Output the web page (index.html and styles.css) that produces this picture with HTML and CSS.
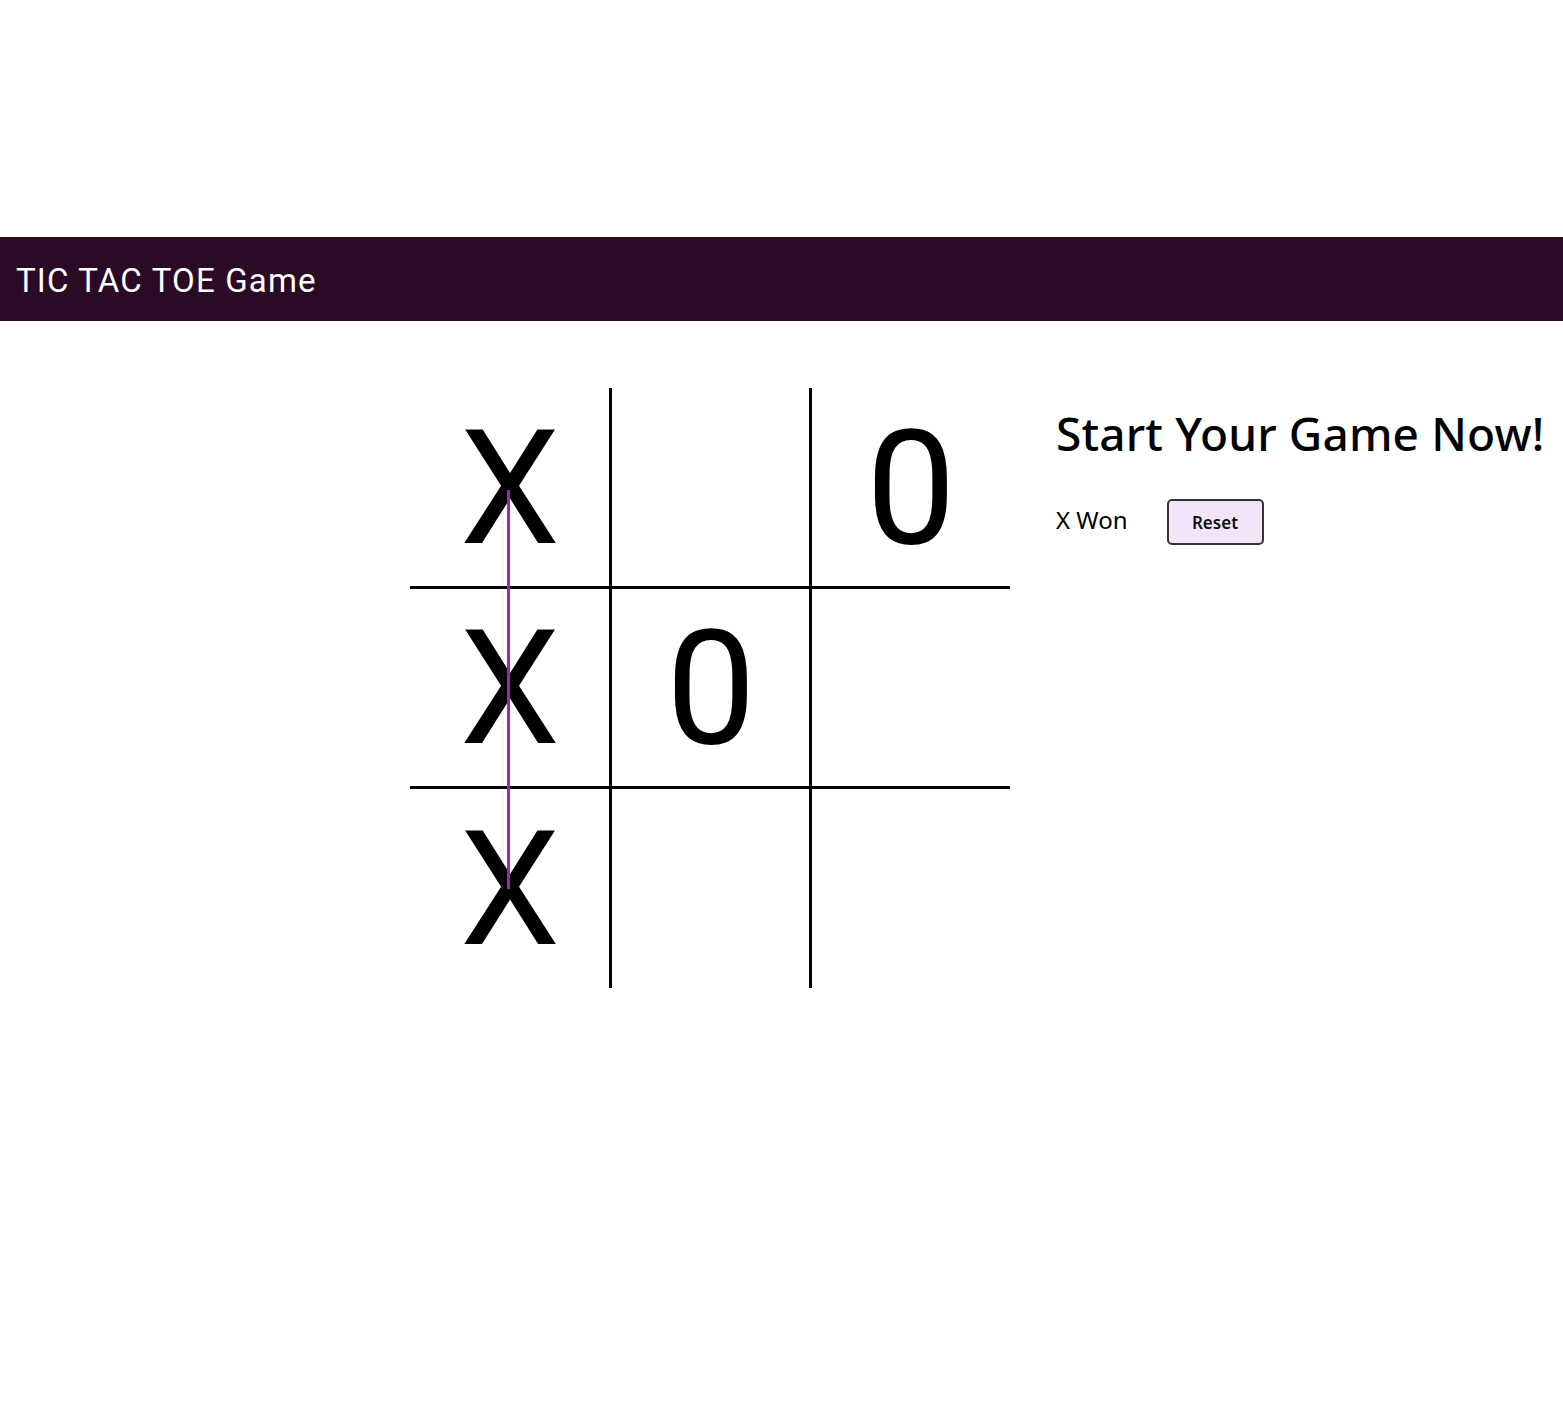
FILE: index.html
```html
<!DOCTYPE html>
<html>
<head>
<meta charset="utf-8">
<title>TIC TAC TOE Game</title>
<link rel="stylesheet" href="styles.css">
</head>
<body>
<header class="topbar">
  <h1 class="brand">TIC TAC TOE Game</h1>
</header>
<main class="game">
  <div class="board">
    <div class="cell br bb">X</div>
    <div class="cell br bb"></div>
    <div class="cell bb">0</div>
    <div class="cell br bb">X</div>
    <div class="cell br bb">0</div>
    <div class="cell bb"></div>
    <div class="cell br">X</div>
    <div class="cell br"></div>
    <div class="cell"></div>
    <div class="win-line"></div>
  </div>
  <section class="panel">
    <h2 class="title">Start Your Game Now!</h2>
    <div class="status-row">
      <span class="status">X Won</span>
      <button class="reset">Reset</button>
    </div>
  </section>
</main>
</body>
</html>
```

FILE: styles.css
```css
html, body {
  margin: 0;
  padding: 0;
  background: #ffffff;
}
body {
  font-family: Roboto, "Liberation Sans", sans-serif;
  color: #000;
  padding-top: 237px;
}
.topbar {
  background: #2a0a24;
  height: 84px;
  display: flex;
  align-items: center;
  padding-left: 16px;
}
.brand {
  margin: 0;
  color: #ffffff;
  font-family: Roboto, sans-serif;
  font-weight: 400;
  font-size: 33px;
  letter-spacing: 1.15px;
  padding-top: 2px;
}
.game {
  display: flex;
  align-items: flex-start;
  padding-left: 410px;
  padding-top: 67px;
  gap: 46px;
}
.board {
  position: relative;
  display: grid;
  grid-template-columns: 202px 200px 198px;
  grid-template-rows: 201px 200px 199px;
  width: 600px;
  flex: none;
}
.cell {
  display: flex;
  align-items: center;
  justify-content: center;
  font-family: Roboto, sans-serif;
  font-size: 160px;
  line-height: 1;
  box-sizing: border-box;
  padding-top: 3px;
}
.br { border-right: 3px solid #000; }
.bb { border-bottom: 3px solid #000; }
.cell.br { padding-left: 1px; }
.win-line {
  position: absolute;
  left: 97px;
  top: 102px;
  width: 3px;
  height: 399px;
  background: #9c27b0;
}
.panel {
  padding-top: 18px;
}
.title {
  margin: 0;
  font-family: "Noto Sans", sans-serif;
  font-weight: 500;
  font-size: 46px;
  letter-spacing: 0.15px;
  line-height: 1.2;
}
.status-row {
  display: flex;
  align-items: center;
  gap: 39px;
  margin-top: 38px;
}
.status {
  font-family: "Noto Sans", sans-serif;
  font-size: 24px;
  margin-top: -6px;
}
.reset {
  width: 97px;
  height: 46px;
  background: #f3e5f8;
  border: 2px solid #333;
  border-radius: 5px;
  font-family: "Noto Sans", sans-serif;
  font-weight: 600;
  font-size: 17px;
  color: #111;
  padding: 0;
}
```
